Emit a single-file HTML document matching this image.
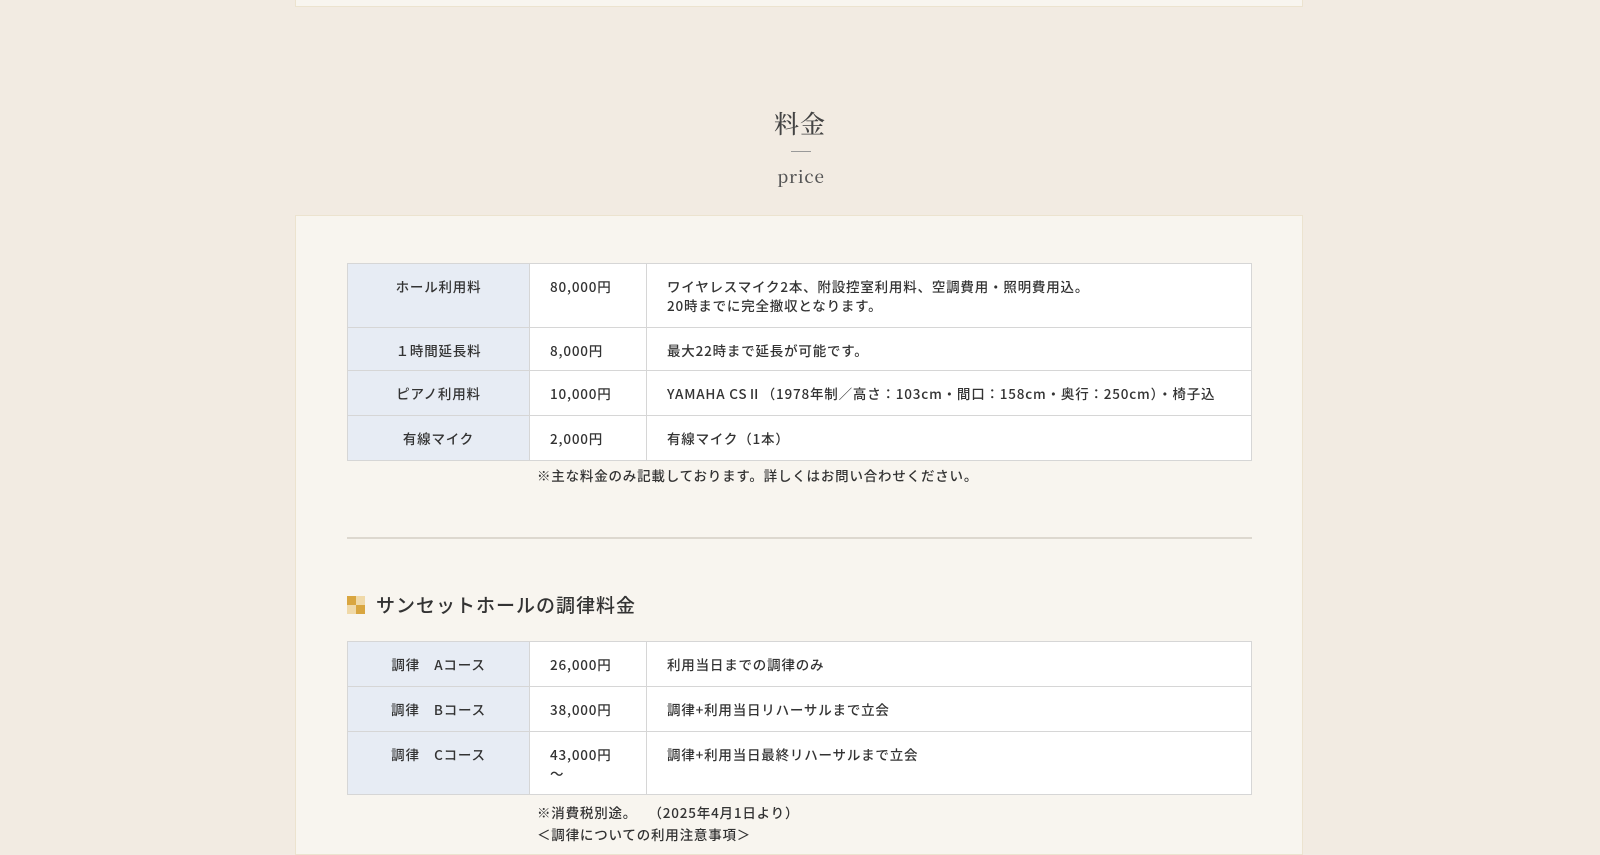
<!DOCTYPE html>
<html><head><meta charset="utf-8"><style>
body{margin:0;width:1600px;height:842px;overflow:hidden;background:#f2ebe2;font-family:"Noto Sans CJK JP","Liberation Sans",sans-serif;color:#333;position:relative;font-weight:500}
.card{position:absolute;left:295px;width:1008px;background:#f8f5ef;border:1px solid #ece3cf;box-sizing:border-box}
.t{position:absolute;left:347px;width:905px;border-collapse:collapse;font-size:13.5px;letter-spacing:0.8px;table-layout:fixed}
.t td{border:1px solid #d6d6d6;background:#fff;vertical-align:top;padding:13px 20px 0;line-height:19px;white-space:nowrap;box-sizing:border-box}
.t td.h{background:#e7ecf4;text-align:center;width:182px}
.t td.p{width:117px}
.abs{position:absolute;font-size:13.5px;letter-spacing:0.8px}
</style></head><body>
<div class="card" style="top:-10px;height:17px"></div>
<div class="abs" style="left:0;width:1600px;top:105px;text-align:center;font-family:'Noto Serif CJK SC',serif;font-size:25px;letter-spacing:1px;color:#444">料金</div>
<div style="position:absolute;left:791px;top:151px;width:20px;height:1px;background:#999"></div>
<div class="abs" style="left:0;width:1602px;top:163px;text-align:center;font-family:'Noto Serif CJK SC','Liberation Serif',serif;font-size:17px;color:#555">price</div>
<div class="card" style="top:215px;height:640px"></div>
<table class="t" style="top:263px">
<tr style="height:64px"><td class="h">ホール利用料</td><td class="p">80,000円</td><td>ワイヤレスマイク2本、附設控室利用料、空調費用・照明費用込。<br>20時までに完全撤収となります。</td></tr>
<tr style="height:43px"><td class="h">１時間延長料</td><td class="p">8,000円</td><td>最大22時まで延長が可能です。</td></tr>
<tr style="height:45px"><td class="h">ピアノ利用料</td><td class="p">10,000円</td><td>YAMAHA CSⅡ（1978年制／高さ：103cm・間口：158cm・奥行：250cm）・椅子込</td></tr>
<tr style="height:45px"><td class="h">有線マイク</td><td class="p">2,000円</td><td>有線マイク（1本）</td></tr>
</table>
<div class="abs" style="left:537px;top:465px">※主な料金のみ記載しております。詳しくはお問い合わせください。</div>
<div style="position:absolute;left:347px;top:537px;width:905px;height:2px;background:#ddd8cf"></div>
<div style="position:absolute;left:347px;top:596px;width:18px;height:18px">
<div style="position:absolute;left:0;top:0;width:9px;height:9px;background:#d9a640"></div>
<div style="position:absolute;left:9px;top:0;width:9px;height:9px;background:#f0d9a8"></div>
<div style="position:absolute;left:0;top:9px;width:9px;height:9px;background:#f0d9a8"></div>
<div style="position:absolute;left:9px;top:9px;width:9px;height:9px;background:#d9a640"></div></div>
<div class="abs" style="left:376px;top:591px;font-size:19px;letter-spacing:1px;color:#333">サンセットホールの調律料金</div>
<table class="t" style="top:641px">
<tr style="height:45px"><td class="h">調律　Aコース</td><td class="p">26,000円</td><td>利用当日までの調律のみ</td></tr>
<tr style="height:45px"><td class="h">調律　Bコース</td><td class="p">38,000円</td><td>調律+利用当日リハーサルまで立会</td></tr>
<tr style="height:63px"><td class="h">調律　Cコース</td><td class="p">43,000円<br>～</td><td>調律+利用当日最終リハーサルまで立会</td></tr>
</table>
<div class="abs" style="left:537px;top:801px;line-height:22px;white-space:pre">※消費税別途。　 （2025年4月1日より）
＜調律についての利用注意事項＞</div>
</body></html>
